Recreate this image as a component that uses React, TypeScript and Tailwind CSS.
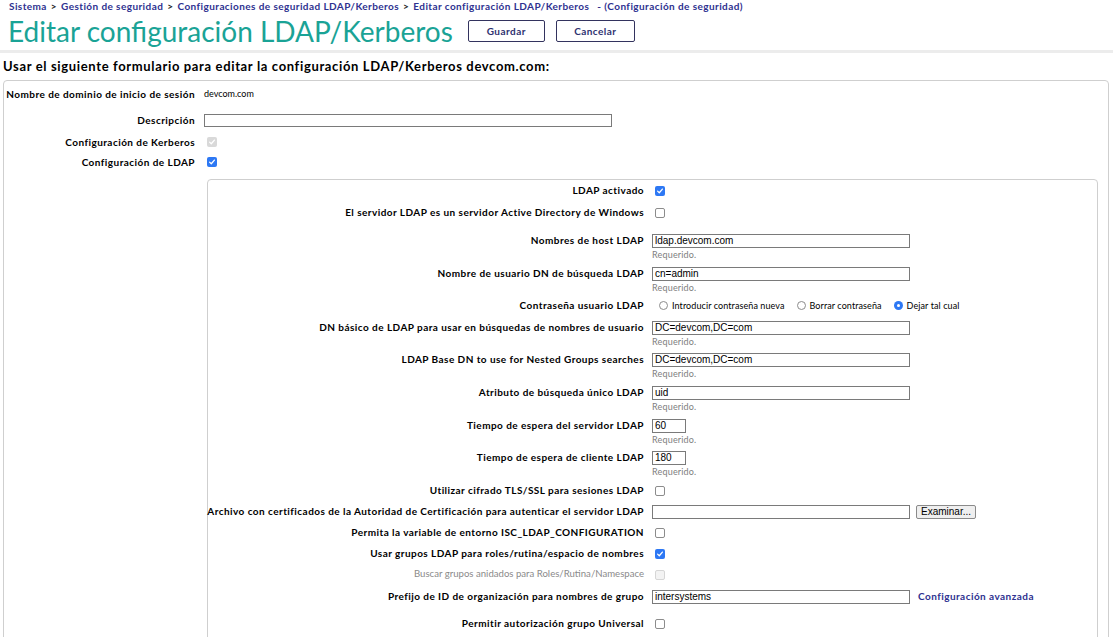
import React from "react";

const FONT = "font-['Lato','Noto_Sans',sans-serif]";

function Box({ checked, disabled }: { checked?: boolean; disabled?: boolean }) {
  if (checked)
    return (
      <span
        className={`ml-[3px] inline-flex h-[10px] w-[10px] items-center justify-center rounded-[2px] ${
          disabled ? "bg-[#d9d9d9]" : "bg-[#2d78f4]"
        }`}
      >
        <svg viewBox="0 0 10 10" className="h-[8px] w-[8px]">
          <path d="M2 5.2 L4.1 7.2 L8 2.6" fill="none" stroke="#fff" strokeWidth="1.6" strokeLinecap="round" strokeLinejoin="round" />
        </svg>
      </span>
    );
  if (disabled)
    return <span className="ml-[3px] inline-block h-[10px] w-[10px] rounded-[2px] border border-[#d6d6d6] bg-[#f3f3f3]" />;
  return <span className="ml-[3px] inline-block h-[10px] w-[10px] rounded-[2px] border border-[#8c8c8c] bg-white" />;
}

function Radio({ on, label }: { on?: boolean; label: string }) {
  return (
    <span className="flex items-center gap-[4px]">
      {on ? (
        <span className="inline-flex h-[9px] w-[9px] items-center justify-center rounded-full bg-[#2d78f4]">
          <span className="h-[3px] w-[3px] rounded-full bg-white" />
        </span>
      ) : (
        <span className="inline-block h-[9px] w-[9px] rounded-full border border-[#8c8c8c] bg-white" />
      )}
      <span className="text-[9px] tracking-[0.01em] text-black">{label}</span>
    </span>
  );
}

function TextInput({ value, w }: { value: string; w: string }) {
  return (
    <span
      className={`${w} inline-flex h-[14px] items-center border border-[#7a7a7a] bg-white pl-[2px] font-['Liberation_Sans',Arial,sans-serif] text-[10px] leading-none text-black`}
    >
      {value}
    </span>
  );
}

function Req() {
  return <div className="text-[9px] leading-[8px] tracking-[0.02em] text-[#808080]">Requerido.</div>;
}

function Row({ label, h, muted, children }: { label: string; h: string; muted?: boolean; children: React.ReactNode }) {
  return (
    <div className={`flex ${h}`}>
      <div
        className={`flex h-[21px] w-[436px] shrink-0 items-center justify-end whitespace-nowrap text-right ${
          muted ? "text-[9.6px] font-normal text-[#8a8a8a]" : "text-[10px] font-bold tracking-[0.045em] text-black"
        }`}
      >
        {label}
      </div>
      <div className="ml-[8px] flex flex-col">{children}</div>
    </div>
  );
}

function Line({ children }: { children: React.ReactNode }) {
  return <div className="flex h-[21px] items-center">{children}</div>;
}

function OuterRow({ label, className, children }: { label: string; className: string; children: React.ReactNode }) {
  return (
    <div className={`flex items-center ${className}`}>
      <div className="w-[191px] shrink-0 whitespace-nowrap text-right text-[10px] font-bold tracking-[0.045em]">{label}</div>
      <div className="ml-[9px] flex">{children}</div>
    </div>
  );
}

export default function App() {
  const crumbs = [
    "Sistema",
    "Gestión de seguridad",
    "Configuraciones de seguridad LDAP/Kerberos",
    "Editar configuración LDAP/Kerberos",
  ];

  return (
    <div className={`h-[637px] w-[1113px] overflow-hidden bg-white ${FONT}`}>
      {/* breadcrumb */}
      <div className="flex h-[13px] items-center pl-[9px] text-[10px] font-bold tracking-[0.042em] text-[#2e3190]">
        {crumbs.map((c, i) => (
          <span key={c} className="flex items-center">
            {i > 0 && <span className="mx-[4px] text-[#222]">&gt;</span>}
            <span>{c}</span>
          </span>
        ))}
        <span className="ml-[8px]">- (Configuración de seguridad)</span>
      </div>

      {/* title + buttons */}
      <div className="flex h-[36px] items-center pl-[8px]">
        <h1 className="text-[28px] font-normal leading-none text-[#1aa396]">Editar configuración LDAP/Kerberos</h1>
        <button className="ml-[15px] h-[22px] w-[77px] rounded-[2px] border border-[#33335e] bg-white text-[10px] font-bold tracking-[0.045em] text-[#2e3170]">
          Guardar
        </button>
        <button className="ml-[11px] h-[22px] w-[79px] rounded-[2px] border border-[#33335e] bg-white text-[10px] font-bold tracking-[0.045em] text-[#2e3170]">
          Cancelar
        </button>
      </div>
      <div className="mt-[1px] h-[3px] bg-[#ececec]" />

      <div className="flex h-[27px] items-center pl-[3px] text-[13px] font-bold tracking-[0.05em] text-black">
        Usar el siguiente formulario para editar la configuración LDAP/Kerberos devcom.com:
      </div>

      {/* outer box */}
      <div className="ml-[3px] mr-[4px] rounded-tl-[4px] rounded-tr-[4px] border border-[#cfcfcf] pt-[2px]">
        <OuterRow label="Nombre de dominio de inicio de sesión" className="h-[22px]">
          <span className="text-[9px] text-black">devcom.com</span>
        </OuterRow>
        <OuterRow label="Descripción" className="mt-[4px] h-[22px]">
          <span className="inline-block h-[13px] w-[408px] border border-[#7a7a7a] bg-white" />
        </OuterRow>
        <OuterRow label="Configuración de Kerberos" className="mt-px h-[20px]">
          <Box checked disabled />
        </OuterRow>
        <OuterRow label="Configuración de LDAP" className="h-[20px]">
          <Box checked />
        </OuterRow>

        {/* inner box */}
        <div className="ml-[203px] mr-[10px] mt-[7px] rounded-tl-[4px] rounded-tr-[4px] border border-[#cfcfcf] pb-[20px]">
          <Row label="LDAP activado" h="h-[22px]">
            <Line>
              <Box checked />
            </Line>
          </Row>
          <Row label="El servidor LDAP es un servidor Active Directory de Windows" h="h-[28px]">
            <Line>
              <Box />
            </Line>
          </Row>
          <Row label="Nombres de host LDAP" h="h-[33px]">
            <Line>
              <TextInput value="ldap.devcom.com" w="w-[258px]" />
            </Line>
            <Req />
          </Row>
          <Row label="Nombre de usuario DN de búsqueda LDAP" h="h-[32px]">
            <Line>
              <TextInput value="cn=admin" w="w-[258px]" />
            </Line>
            <Req />
          </Row>
          <Row label="Contraseña usuario LDAP" h="h-[22px]">
            <Line>
              <div className="ml-[7px] flex items-center gap-[12px]">
                <Radio label="Introducir contraseña nueva" />
                <Radio label="Borrar contraseña" />
                <Radio on label="Dejar tal cual" />
              </div>
            </Line>
          </Row>
          <Row label="DN básico de LDAP para usar en búsquedas de nombres de usuario" h="h-[32px]">
            <Line>
              <TextInput value="DC=devcom,DC=com" w="w-[258px]" />
            </Line>
            <Req />
          </Row>
          <Row label="LDAP Base DN to use for Nested Groups searches" h="h-[33px]">
            <Line>
              <TextInput value="DC=devcom,DC=com" w="w-[258px]" />
            </Line>
            <Req />
          </Row>
          <Row label="Atributo de búsqueda único LDAP" h="h-[33px]">
            <Line>
              <TextInput value="uid" w="w-[258px]" />
            </Line>
            <Req />
          </Row>
          <Row label="Tiempo de espera del servidor LDAP" h="h-[32px]">
            <Line>
              <TextInput value="60" w="w-[34px]" />
            </Line>
            <Req />
          </Row>
          <Row label="Tiempo de espera de cliente LDAP" h="h-[33px]">
            <Line>
              <TextInput value="180" w="w-[34px]" />
            </Line>
            <Req />
          </Row>
          <Row label="Utilizar cifrado TLS/SSL para sesiones LDAP" h="h-[21px]">
            <Line>
              <Box />
            </Line>
          </Row>
          <Row label="Archivo con certificados de la Autoridad de Certificación para autenticar el servidor LDAP" h="h-[21px]">
            <Line>
              <TextInput value="" w="w-[258px]" />
              <span className="ml-[6px] inline-flex h-[14px] w-[60px] items-center justify-center rounded-[2px] border border-[#8a8a8a] bg-[#efefef] font-['Liberation_Sans',Arial,sans-serif] text-[10px] text-black">
                Examinar...
              </span>
            </Line>
          </Row>
          <Row label="Permita la variable de entorno ISC_LDAP_CONFIGURATION" h="h-[21px]">
            <Line>
              <Box />
            </Line>
          </Row>
          <Row label="Usar grupos LDAP para roles/rutina/espacio de nombres" h="h-[21px]">
            <Line>
              <Box checked />
            </Line>
          </Row>
          <Row label="Buscar grupos anidados para Roles/Rutina/Namespace" h="h-[22px]" muted>
            <Line>
              <Box disabled />
            </Line>
          </Row>
          <Row label="Prefijo de ID de organización para nombres de grupo" h="h-[27px]">
            <Line>
              <TextInput value="intersystems" w="w-[258px]" />
              <a className="ml-[8px] text-[10px] font-bold tracking-[0.045em] text-[#2e3190]">Configuración avanzada</a>
            </Line>
          </Row>
          <Row label="Permitir autorización grupo Universal" h="h-[22px]">
            <Line>
              <Box />
            </Line>
          </Row>
        </div>
      </div>
    </div>
  );
}
